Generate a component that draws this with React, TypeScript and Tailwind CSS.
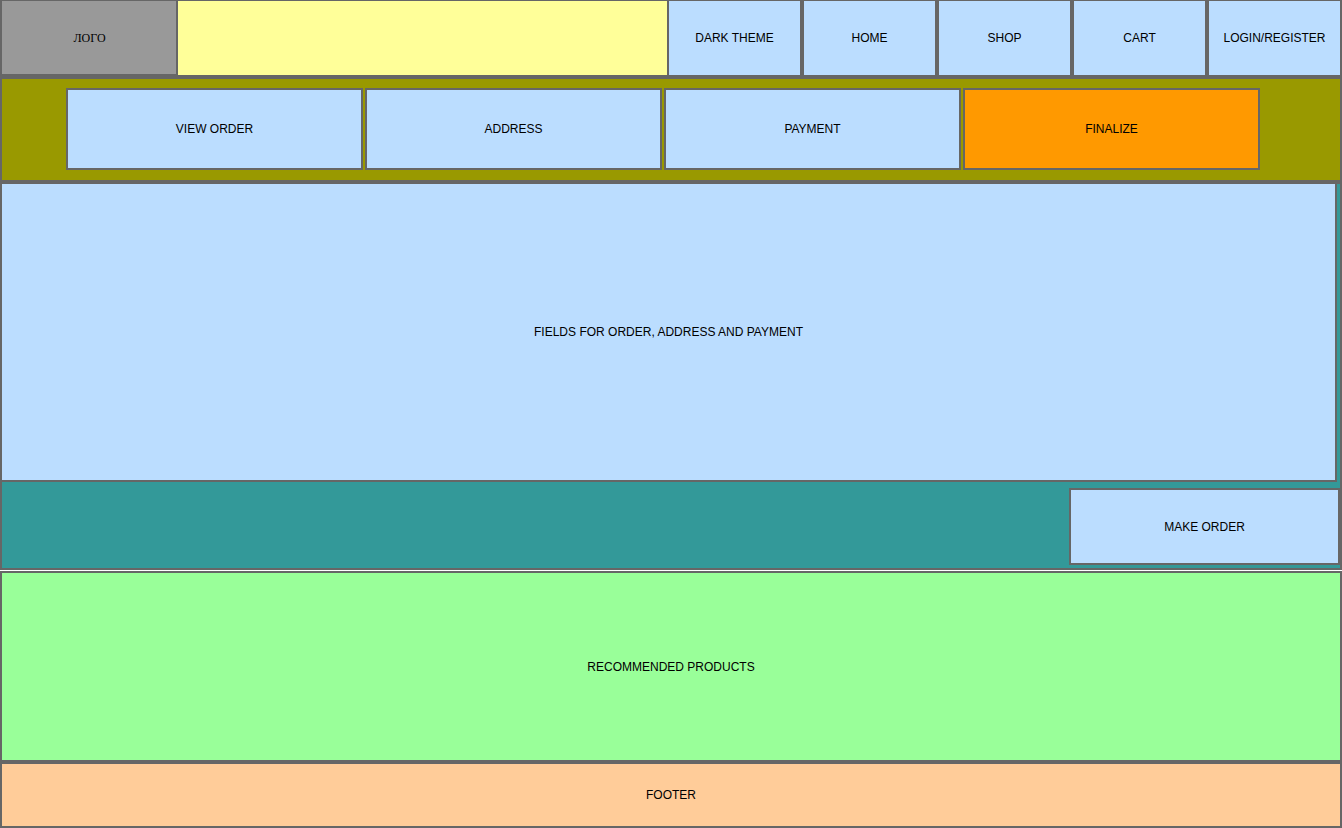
import React from "react";

const navItems = ["DARK THEME", "HOME", "SHOP", "CART", "LOGIN/REGISTER"];

const steps = [
  { label: "VIEW ORDER", active: false },
  { label: "ADDRESS", active: false },
  { label: "PAYMENT", active: false },
  { label: "FINALIZE", active: true },
];

export default function App() {
  return (
    <div className="flex min-h-screen flex-col bg-white font-['Liberation_Sans',Arial,sans-serif] text-[12px] leading-4 text-black">
      <header className="flex min-h-[77px] border-t border-[#666666] bg-[#ffff99]">
        <a
          href="#"
          className="flex w-[178px] shrink-0 items-center justify-center border-x-2 border-b-3 border-[#666666] bg-[#999999] pl-px font-['Liberation_Serif',serif]"
        >
          ЛОГО
        </a>
        <div className="flex-1 border-b-2 border-[#666666]" />
        <nav className="flex">
          {navItems.map((item) => (
            <button
              key={item}
              type="button"
              className="w-[135px] border-x-2 border-b-2 border-[#666666] bg-[#bbddff]"
            >
              {item}
            </button>
          ))}
        </nav>
      </header>

      <nav
        aria-label="Checkout steps"
        className="border-2 border-[#666666] bg-[#999900] pt-[9px] pr-20 pb-2.5 pl-16"
      >
        <ol className="grid grid-cols-4 gap-0.5">
          {steps.map((step) => (
            <li key={step.label} className="flex">
              <button
                type="button"
                aria-current={step.active ? "step" : undefined}
                className={`h-[82px] flex-1 border-2 border-[#666666] ${
                  step.active ? "bg-[#ff9900]" : "bg-[#bbddff]"
                }`}
              >
                {step.label}
              </button>
            </li>
          ))}
        </ol>
      </nav>

      <main className="flex flex-1 flex-col">
        <section className="flex flex-col gap-1.5 border-2 border-[#666666] bg-[#339999] pb-[3px]">
          <div className="mr-[3px] flex min-h-[298px] items-center justify-center border-r-2 border-b-2 border-[#666666] bg-[#bbddff]">
            FIELDS FOR ORDER, ADDRESS AND PAYMENT
          </div>
          <button
            type="button"
            className="h-[77px] w-[271px] self-end border-2 border-[#666666] bg-[#bbddff]"
          >
            MAKE ORDER
          </button>
        </section>

        <section className="mt-px flex min-h-[191px] flex-1 items-center justify-center border-2 border-[#666666] bg-[#99ff99]">
          RECOMMENDED PRODUCTS
        </section>
      </main>

      <footer className="flex min-h-[66px] items-center justify-center border-2 border-[#666666] bg-[#ffcc99]">
        FOOTER
      </footer>
    </div>
  );
}
